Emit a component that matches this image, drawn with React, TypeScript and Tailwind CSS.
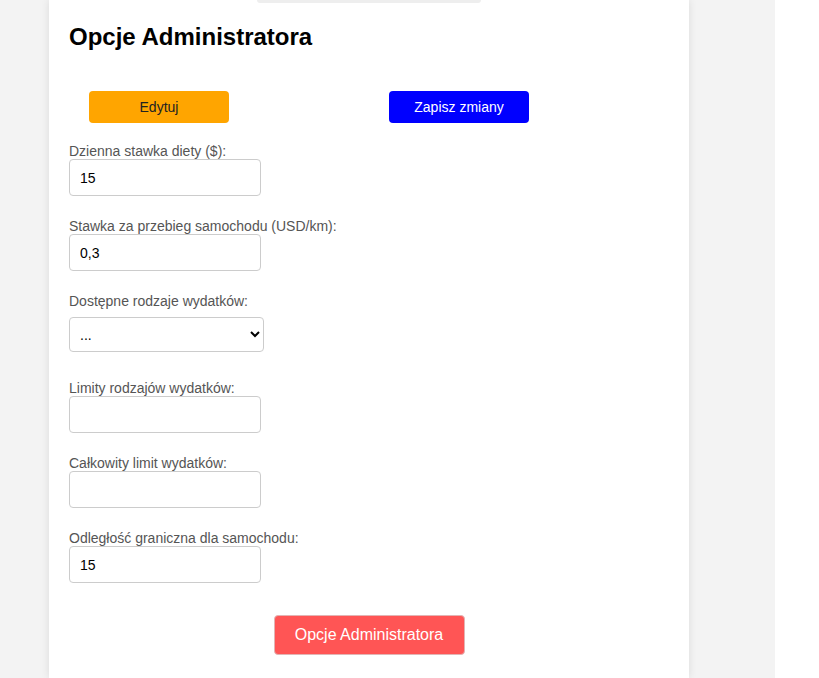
import { useState } from 'react';

const fields = [
  { key: 'diet', label: 'Dzienna stawka diety ($):', value: '15' },
  { key: 'mileage', label: 'Stawka za przebieg samochodu (USD/km):', value: '0,3' },
];

const fieldsAfter = [
  { key: 'typeLimits', label: 'Limity rodzajów wydatków:', value: '' },
  { key: 'totalLimit', label: 'Całkowity limit wydatków:', value: '' },
  { key: 'distance', label: 'Odległość graniczna dla samochodu:', value: '15' },
];

function Field({ label, value }: { label: string; value: string }) {
  const [val, setVal] = useState(value);
  return (
    <div className="mb-[22px]">
      <label className="block text-[14px] leading-[16px] text-[#555]">{label}</label>
      <input
        type="text"
        value={val}
        onChange={(e) => setVal(e.target.value)}
        className="block w-[192px] h-[37px] px-[10px] rounded-[4px] border border-[#ccc] bg-white text-[14px] text-black focus:outline-none"
      />
    </div>
  );
}

export default function App() {
  return (
    <div className="flex min-h-screen bg-white" style={{ fontFamily: '"Liberation Sans", Arial, sans-serif' }}>
      <div className="w-[775px] bg-[#f3f3f3] pl-[49px]">
        <div className="w-[640px] min-h-screen bg-white px-[20px] shadow-[0_0_8px_rgba(0,0,0,0.1)]">
          <div className="mx-auto w-[224px] h-[3px] rounded-b-[4px] bg-[#eeeeee]" />
          <h2 className="mt-[20px] text-[24px] leading-[28px] font-bold text-black">Opcje Administratora</h2>

          <div className="mt-[40px] flex">
            <button className="ml-[20px] w-[140px] h-[32px] rounded-[4px] bg-[#ffa500] text-[14px] text-[#222]">
              Edytuj
            </button>
            <button className="ml-[160px] w-[140px] h-[32px] rounded-[4px] bg-[#0000ff] text-[14px] text-white">
              Zapisz zmiany
            </button>
          </div>

          <div className="mt-[20px]">
            {fields.map((f) => (
              <Field key={f.key} label={f.label} value={f.value} />
            ))}

            <div className="mb-[28px]">
              <label className="block text-[14px] leading-[16px] text-[#555]">Dostępne rodzaje wydatków:</label>
              <select className="mt-[8px] block w-[195px] h-[35px] pl-[6px] rounded-[4px] border border-[#ccc] bg-white text-[14px] text-black">
                <option>...</option>
              </select>
            </div>

            {fieldsAfter.map((f) => (
              <Field key={f.key} label={f.label} value={f.value} />
            ))}
          </div>

          <div className="mt-[32px] flex justify-center">
            <button className="w-[191px] h-[40px] rounded-[4px] border border-[#e2b4b4] bg-[#ff5555] text-[16px] text-white">
              Opcje Administratora
            </button>
          </div>
        </div>
      </div>
      <div className="flex-1 bg-white" />
    </div>
  );
}
